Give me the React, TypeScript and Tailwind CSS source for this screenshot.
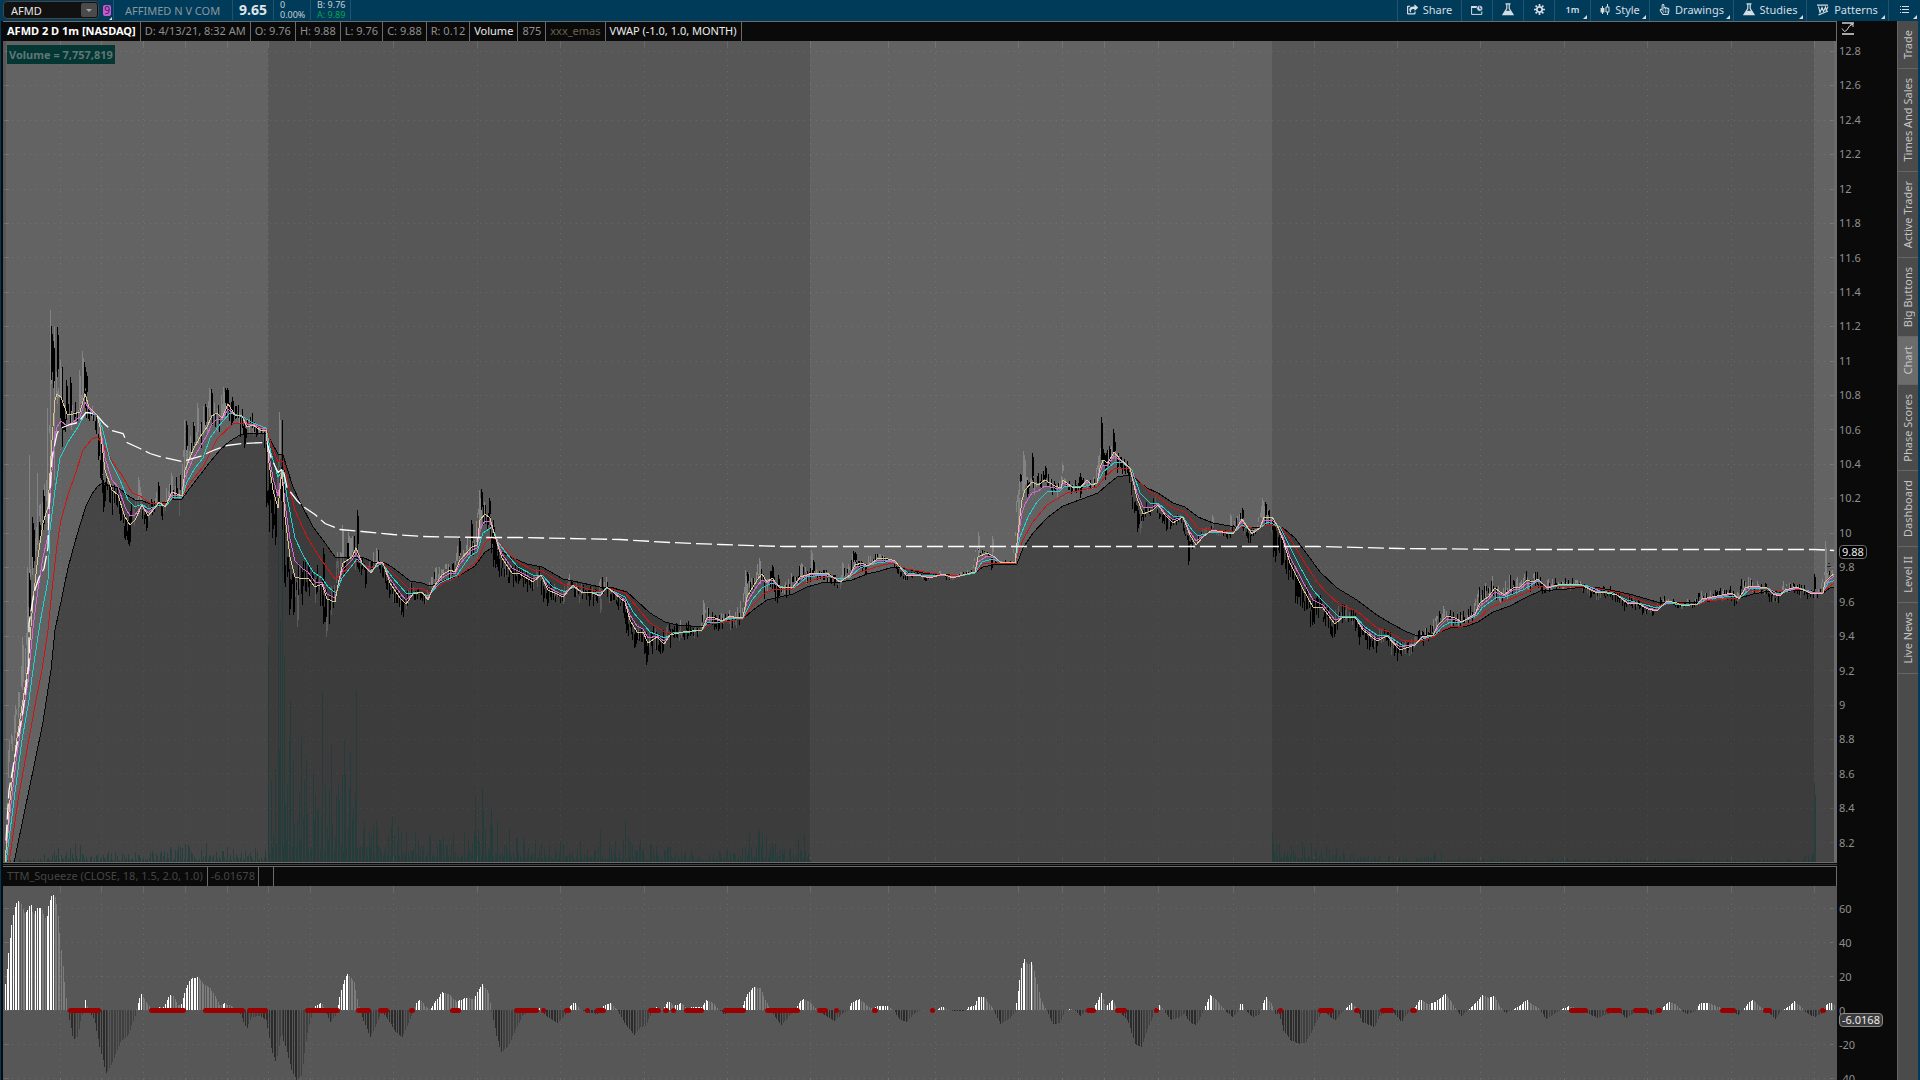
import React, { useState } from "react";
import { FaShareSquare, FaRegHandPointer } from "react-icons/fa";

type Point = [number, number];

// "x,y x,y ..." -> points
const parse = (s: string): Point[] => s.trim().split(/\s+/).map((p) => p.split(",").map(Number) as Point);

const valueAt = (line: Point[], x: number) => {
    if (x <= line[0][0]) return line[0][1];
    for (let i = 1; i < line.length; i++) {
        const [x1, y1] = line[i];
        if (x <= x1) {
            const [x0, y0] = line[i - 1];
            return y0 + ((y1 - y0) * (x - x0)) / (x1 - x0 || 1);
        }
    }
    return line[line.length - 1][1];
};

// small seeded generator, keeps the bars stable between renders
const createRandom = (seed: number) => () => {
    seed = (seed * 1664525 + 1013904223) % 4294967296;
    return seed / 4294967296;
};

const slow = parse(`14,863 24,814 34,766 43,722 51,670 55,630 62,597 68,568 75,542 80,525 86,506 92,494 97,487 102,483 108,485 115,487 120,489 127,495 135,500 143,501 148,503 157,504 167,502 173,499 182,499 190,488 200,475 210,462 220,450 230,441 240,435 253,433 267,433 272,443 278,454 283,455 287,468 293,487 300,502 313,527 323,540 335,557 353,557 362,557 373,562 383,562 392,567 400,573 410,581 422,583 430,586 438,583 448,579 457,577 467,571 475,566
485,552 492,548 500,551 513,558 527,564 542,567 563,579 573,581 600,587 613,588 627,592 637,601 650,613 665,622 677,625 702,627 707,624 727,621 743,619 753,610 767,600 780,597 793,594 807,587 825,582 840,582 852,580 867,574 880,571 893,567 907,569 923,573 937,574 950,575 963,575 975,573 983,567 993,565 1017,564 1023,548 1033,533 1047,518 1063,506 1082,499 1098,493 1107,485 1117,477 1130,475 1137,480 1147,488 1158,493 1173,503 1185,507 1198,517 1213,523 1235,527 1257,528 1268,524 1283,528 1295,538 1307,554 1320,572 1337,588 1357,600 1377,615 1390,623 1407,632 1415,635 1430,635
1443,631 1450,628 1467,626 1478,622 1493,612 1510,606 1525,598 1540,591 1567,589 1583,587 1600,588 1620,592 1633,595 1657,602 1673,602 1697,603 1717,600 1740,598 1753,594 1770,591 1780,592 1800,590 1813,592 1823,593 1830,588 1835,587`);

const medium = parse(`9,863 18,800 27,750 36,700 42,670 48,630 52,590 57,545 61,520 68,495 75,475 83,450 92,439 97,437 102,443 112,461 123,477 132,493 140,496 150,503 167,503 173,498 182,497 190,483 203,467 217,439 233,424 245,423 255,425 267,430 272,447 278,462 283,461 288,483 295,510 307,537 320,558 335,579 348,568 357,561 370,568 383,563 393,573 408,588 423,589 430,593 443,583 457,577 477,562 485,543 492,537 498,541 510,555 520,563 533,570 542,571 553,578 565,585 573,585 600,592 608,588 625,593 637,607 650,623 665,632 683,632 702,630 710,624 743,619 753,605 765,593 775,589 790,590 807,582 823,577 840,579 850,577 860,572 883,565 893,563 907,569 930,573 950,576
963,575 975,573 983,564 993,563 1015,563 1022,542 1032,523 1047,505 1067,493 1082,490 1097,487 1105,477 1115,468 1128,468 1137,479 1148,490 1158,497 1173,508 1185,512 1198,528 1213,530 1235,532 1243,526 1257,529 1268,524 1282,528 1293,543 1303,560 1317,582 1327,593 1340,605 1357,611 1377,628 1387,631 1402,640 1415,642 1425,640 1435,636 1443,630 1450,627 1463,626 1477,620 1490,608 1503,602 1523,594 1538,586 1550,587 1567,586 1585,586 1600,589 1620,593 1633,598 1657,606 1670,603 1697,605 1707,601 1737,598 1750,591 1770,589 1780,592 1800,589 1813,592 1823,592 1830,586 1835,583`);

const quick = parse(`6,863 14,800 22,740 29,700 33,670 40,623 48,580 50,530 55,490 60,458 68,442 78,427 86,412 97,415 102,427 110,460 120,480 128,500 135,507 142,504 148,509 160,505 167,505 173,497 182,497 187,482 195,468 203,458 210,438 218,427 230,413 243,417 253,423 266,428 271,453 278,477 283,470 287,497 295,538 303,555 313,572 322,578 328,587 336,593 342,578 350,568 357,559 370,571 382,563 392,577 407,594 420,592 428,596 440,583 457,575 470,556 477,552 483,533 492,527 498,542 510,558 518,567 533,575 542,575 553,587 565,592 573,587 583,592 600,593 607,588 625,597 633,612 650,632 665,638 673,633 690,632 702,630 708,622 720,622 730,618 743,618 752,600 762,588 772,583 783,587 795,587 807,577 823,575 840,579 850,577 860,568 877,563 893,561 908,573 928,576 940,575
955,577 975,573 982,562 992,559 1002,562 1015,563 1020,537 1028,517 1037,502 1048,491 1060,491 1065,486 1082,487 1097,483 1103,472 1115,462 1123,463 1132,470 1140,493 1150,503 1158,503 1173,516 1183,517 1192,530 1198,536 1212,532 1233,533 1242,525 1252,531 1260,528 1268,522 1280,527 1290,547 1300,567 1313,590 1323,601 1338,616 1355,616 1365,627 1377,635 1387,635 1402,645 1413,645 1420,640 1435,635 1442,627 1450,622 1462,622 1477,615 1483,607 1497,597 1505,597 1523,590 1538,581 1548,587 1567,585 1585,585 1600,591 1613,593 1627,600 1657,608 1668,603 1683,605 1698,604 1707,599 1733,596 1740,598 1750,589 1768,588 1778,594 1798,588 1812,592 1823,592 1828,583 1835,580`);

const fast = parse(`5,863 10,800 16,745 23,700 28,667 33,600 38,557 43,523 48,507 52,440 55,400 57,394 61,397 67,414 73,414 80,412 85,394 89,407 97,415 100,427 105,470 112,490 118,495 125,517 130,525 135,520 142,505 148,516 155,508 159,502 165,507 172,492 182,496 185,470 193,450 200,437 207,427 212,416 217,413 222,418 228,404 235,415 242,416 247,427 253,425 260,430 266,430 269,463 273,490 278,508 282,470 285,517 290,557 295,577 303,579 308,578 315,587 322,584 327,599 335,602 339,580 343,563 352,557 356,548 363,565 371,573 378,562 383,563 390,583 400,598 406,604 413,594 422,592 428,600 433,588 442,575 450,570 455,572 460,560 472,547 477,545 480,520 485,514 490,518 494,533 502,558 512,573 520,574 533,582 541,575 548,590 557,594 563,597 573,585 582,593 590,592 600,596 607,587 615,594 625,602 630,620 637,632 643,632 648,643 657,637 664,644 670,635 683,632 702,630 707,618 713,617 722,621 730,616 737,618 743,617 747,597 757,580 762,574 767,582 772,578 780,588 793,587 800,577 807,575 812,573 827,573 840,582 850,575 855,565 862,563 868,566 877,559 885,558 895,561 907,576 917,575 930,578 943,574
953,578 963,575 975,572 978,557 987,553 995,557 1000,562 1015,563 1018,533 1022,500 1025,490 1032,482 1038,485 1045,480 1055,486 1061,488 1063,480 1072,487 1080,488 1087,480 1092,485 1097,483 1100,468 1103,460 1108,463 1114,452 1120,459 1130,468 1137,498 1143,514 1153,510 1158,505 1165,515 1173,523 1183,517 1190,535 1196,545 1203,537 1212,530 1233,534 1242,519 1252,534 1260,528 1264,517 1272,517 1277,525 1283,540 1290,563 1302,587 1313,607 1323,608 1335,624 1343,617 1355,617 1363,630 1377,641 1387,636 1400,650 1415,645 1422,637 1433,635 1438,625 1447,616 1455,618 1462,622 1470,617 1475,614 1480,603 1488,597 1495,588 1504,595 1513,588 1520,587 1527,580 1533,582 1538,579 1547,588 1558,585 1580,584 1595,592 1607,593 1617,595 1627,603 1637,603 1648,609 1657,611 1667,601 1677,603 1683,606 1697,604 1702,599 1717,596 1732,593 1739,599 1745,588 1752,586 1767,588 1773,594 1780,596 1785,590 1797,587 1810,593 1823,593 1825,582 1830,577 1835,573`);

const vwap = parse(`6,840 9,790 16,750 23,710 29,663 29,623 34,592 39,577 44,568 48,547 49,507 52,457 57,433 60,428 70,424 78,422 86,412 95,413 104,423 112,430 123,433 127,442 140,448 150,453 160,456 182,461 200,456 213,450 227,445 242,443 267,442 271,457 278,472 283,468 287,487 297,500 303,506 315,514 325,523 340,529 362,531 393,534 423,536 480,537 520,537 570,538 620,539 670,542 720,544 783,546 1318,546 1400,548 1512,549 1814,549 1835,550`);

const purple: Point[] = fast.map(([x, y]) => [x, y * 0.6 + valueAt(quick, x) * 0.4]);

// x, high, low, up candle
const spikes: [number, number, number, boolean][] = [
    [22, 637, 690, true], [27, 567, 670, true], [29, 455, 590, true], [29, 573, 618, false], [32, 517, 557, false], [33, 523, 568, false],
    [37, 473, 540, true], [39, 522, 540, false], [43, 490, 530, false], [47, 408, 523, true], [50, 310, 500, true], [51, 326, 380, false], [53, 341, 388, false],
    [54, 327, 480, true], [57, 327, 377, false], [60, 360, 410, true], [62, 367, 447, false], [66, 380, 420, false], [70, 377, 417, false],
    [79, 370, 410, true], [82, 351, 400, true], [84, 362, 393, false], [86, 372, 396, false], [98, 434, 460, false], [101, 440, 480, false], [103, 480, 512, false],
    [129, 517, 546, false], [125, 515, 540, false], [138, 477, 500, true], [146, 510, 531, false], [158, 482, 507, false], [171, 473, 495, true],
    [184, 420, 497, true], [186, 421, 450, false], [193, 422, 446, false], [197, 403, 437, true], [205, 404, 425, false], [209, 388, 417, true],
    [211, 389, 415, false], [223, 387, 417, true], [225, 388, 403, false], [227, 388, 403, false], [232, 397, 423, false], [244, 424, 448, false],
    [266, 443, 507, false], [269, 470, 532, false], [272, 480, 538, false], [275, 490, 545, false], [279, 412, 467, true], [282, 420, 573, false],
    [284, 470, 583, false], [289, 573, 615, false], [293, 575, 615, false], [297, 580, 627, true], [323, 548, 587, false], [325, 590, 622, false],
    [326, 600, 637, true], [342, 525, 557, true], [348, 532, 560, true], [357, 510, 550, false], [376, 548, 565, true], [401, 597, 615, false],
    [459, 538, 556, false], [471, 520, 545, false], [479, 490, 540, true], [481, 489, 510, false], [489, 498, 517, false], [493, 520, 567, false], [495, 540, 568, false],
    [547, 583, 606, false], [563, 590, 604, true], [600, 596, 613, true], [626, 600, 633, false], [635, 630, 647, false], [646, 643, 665, false], [662, 640, 653, false],
    [703, 600, 622, true], [745, 570, 610, true], [747, 572, 583, false], [759, 558, 575, true], [772, 565, 580, false], [778, 583, 598, false],
    [801, 563, 580, true], [811, 550, 573, true], [813, 560, 573, false], [842, 562, 578, true], [853, 551, 562, false], [855, 552, 562, false],
    [978, 532, 557, true], [992, 536, 555, true], [991, 557, 570, false], [1018, 490, 540, true], [1020, 474, 482, false], [1023, 451, 497, true],
    [1024, 455, 490, true], [1027, 480, 497, false], [1032, 453, 480, false], [1045, 466, 480, false], [1062, 463, 473, true], [1080, 473, 498, false],
    [1098, 456, 480, true], [1101, 417, 460, false], [1102, 446, 463, false], [1105, 455, 480, false], [1109, 446, 466, false], [1113, 429, 453, false], [1114, 440, 453, false],
    [1137, 506, 532, false], [1140, 500, 533, true], [1166, 515, 531, false], [1188, 537, 565, false], [1212, 515, 530, true], [1230, 514, 530, true],
    [1242, 508, 520, false], [1262, 498, 520, true], [1265, 502, 517, false], [1273, 520, 557, false], [1275, 525, 562, false], [1281, 530, 565, false],
    [1297, 577, 600, false], [1312, 605, 625, false], [1334, 620, 637, false], [1814, 574, 592, false], [1825, 541, 590, true],
];

// typical candle reach along the session: x, pixels
const reach = parse("5,20 45,22 60,24 75,16 95,12 110,20 160,12 185,24 230,18 262,9 270,26 300,26 345,20 380,12 425,10 450,10 480,16 520,14 560,11 620,12 650,17 700,9 745,14 780,14 830,8 862,9 885,4 975,3 1010,2 1020,12 1090,8 1110,12 1150,9 1210,4 1265,9 1300,22 1340,14 1400,11 1440,10 1480,13 1530,11 1560,6 1620,8 1680,5 1740,8 1800,8 1835,3");

const buildCandles = () => {
    const random = createRandom(41);
    const up: string[] = [];
    const down: string[] = [];
    for (let x = 8; x < 1834; x += 1.4) {
        const size = valueAt(reach, x);
        const slope = valueAt(fast, x + 3) - valueAt(fast, x - 1);
        const middle = valueAt(fast, x) + slope * 1.2 + (random() - 0.5) * size * 0.9;
        const half = size * (0.15 + random() * 0.55);
        const isUp = random() + slope * 0.06 < 0.4;
        const px = Math.round(x) + 0.5;
        (isUp ? up : down).push(`M${px} ${Math.round(middle - half)}V${Math.round(middle + half)}`);
    }
    spikes.forEach(([x, high, low, isUp]) => {
        const inset = Math.round((low - high) * 0.15);
        const target = isUp ? up : down;
        target.push(`M${x + 0.5} ${high}V${low}`);
        if (low - high < 60) target.push(`M${x + 1.5} ${high + inset}V${low - inset}`);
    });
    return { up: up.join(""), down: down.join("") };
};

const volumeReach = parse("5,2 40,4 50,14 85,20 90,9 180,16 190,20 267,14 268,70 285,150 300,110 320,90 355,90 362,55 400,45 440,28 468,34 480,60 500,40 530,22 600,22 630,24 690,12 742,14 746,38 775,30 790,14 809,40 810,0 1272,0 1273,36 1300,22 1360,8 1420,5 1436,14 1450,5 1800,3 1814,12 1815,0");

const buildVolume = () => {
    const random = createRandom(7);
    let d = "";
    for (let x = 6; x < 1815; x += 1.4) {
        const h = Math.round(valueAt(volumeReach, x) * (0.12 + 0.9 * Math.pow(random(), 2)));
        if (h > 0) d += `M${Math.round(x) + 0.5} 862V${862 - h}`;
    }
    const peaks: Point[] = [[268, 646], [278, 515], [280, 620], [282, 530], [284, 656], [290, 700], [301, 735], [322, 692], [331, 745], [344, 740], [356, 690], [350, 752], [475, 796], [482, 788], [491, 807], [600, 830], [625, 820], [1272, 833], [1279, 843], [1435, 853], [1814, 783], [1815, 795]];
    peaks.forEach(([x, y]) => (d += `M${x + 0.5} 862V${y}`));
    return d;
};

const momentum = parse(`5,26 7,45 9,65 12,90 15,105 18,109 21,106 24,97 27,99 30,107 33,95 37,102 41,102 46,90 48,103 51,114 54,116 57,103 60,70 64,30 67,0 69,-10 73,-30 77,-27 80,-12 83,0 85,10 87,3 90,-3 94,-10 100,-40 106,-64 112,-52 120,-32 128,-25 135,-5 137,5 141,16 146,8 152,0 158,3 163,2 169,15 173,14 178,5 181,6 185,20 190,31 198,33 203,26 210,22 216,11 220,4 224,7 230,4 238,0 242,-8 246,-19 251,-7 260,-6 266,-10 271,-40 276,-52 281,-22 286,-40 292,-62 296,-70 301,-66 306,-30 310,-10 314,3 321,8 325,0 330,-13 335,-5 338,6 342,25 347,37 354,28 358,5 362,-8 370,-27 377,-12 382,-2 388,-10 395,-22 402,-27 408,-13 413,-2 416,7 420,11 425,3 430,1 436,10 442,18 450,15 456,8 465,12 474,11 478,20 482,26 488,18 491,0 496,-25 501,-42 508,-36 515,-20 522,-6 530,-1 538,1 540,3 545,-5 557,-13 566,-4 570,4 574,8 580,0 590,-3 598,-4 604,5 610,7 617,0 625,-14 634,-25 640,-17 645,-16 651,-3 656,3 663,0 665,5 668,9 674,4 681,7 686,2 695,3 701,3 706,10 713,7 719,0 724,-4 733,-2 742,3 746,14 753,23 760,22 765,10 770,1 775,-8 781,-15 788,-7 795,0 799,8 803,11 810,8 816,0 825,-6 834,-11 843,-3 848,0 852,8 859,11 866,5 872,1 878,4 887,4 893,0 900,-10 907,-12 913,-4 920,0 936,0 942,3 948,0 955,-1 965,-1 968,3 974,4 978,13 984,13 990,5 994,-1 1000,-14 1009,-9 1015,-1 1018,20 1021,42 1024,51 1028,45 1031,49 1035,35 1040,12 1046,0 1053,-14 1060,-13 1064,0 1070,1 1075,-1 1080,-6 1086,-1 1093,2 1098,10 1101,17 1105,3 1112,10 1118,0 1128,-12 1135,-35 1141,-37 1147,-20 1154,-3 1159,6 1163,0 1171,-10 1180,-7 1184,-3 1190,-13 1196,-15 1202,-3 1205,4 1210,15 1218,8 1224,0 1232,-7 1237,-2 1241,8 1245,0 1252,-7 1259,-5 1263,8 1266,13 1272,5 1275,-4 1279,-4 1283,-20 1290,-30 1299,-34 1306,-32 1312,-20 1318,-8 1323,0 1329,-6 1335,-10 1342,-2 1347,3 1351,7 1356,2 1362,-12 1374,-17 1380,-5 1388,-1 1395,-4 1401,-12 1407,-3 1412,0 1416,5 1420,11 1428,6 1435,8 1445,16 1450,10 1456,0 1461,-6 1468,0 1475,7 1482,15 1488,12 1494,14 1499,5 1505,-3 1512,0 1520,5 1526,10 1532,5 1538,2 1546,-9 1555,-3 1562,1 1568,4 1575,2 1585,-2 1597,-8 1607,-4 1618,-2 1626,-8 1635,-2 1640,-1 1652,-5 1658,-2 1662,2 1668,8 1675,6 1681,0 1686,-4 1694,-2 1700,7 1708,7 1718,3 1728,0 1738,-5 1743,0 1748,7 1753,10 1760,3 1766,0 1775,-9 1782,0 1789,4 1794,9 1801,3 1806,-3 1814,-7 1821,-4 1825,4 1830,8 1833,5`);

const buildMomentum = () => {
    const paths = { rising: "", fading: "", falling: "", recovering: "" };
    for (let x = 5; x < 1834; x += 1.6) {
        const v = valueAt(momentum, x);
        const growing = Math.abs(v) >= Math.abs(valueAt(momentum, x - 2));
        if (Math.abs(v) < 0.6) continue;
        const bar = `M${Math.round(x) + 0.5} 1010V${Math.round(1010 - v)}`;
        if (v > 0) paths[growing ? "rising" : "fading"] += bar;
        else paths[growing ? "falling" : "recovering"] += bar;
    }
    return paths;
};

const squeezes: Point[] = [[68, 101], [149, 186], [203, 245], [247, 268], [305, 340], [356, 371], [378, 389], [409, 415], [450, 461], [514, 539], [541, 546], [564, 571], [585, 590], [595, 606], [648, 661], [663, 669], [671, 676], [684, 704], [723, 746], [765, 800], [817, 828], [834, 839], [872, 878], [930, 935], [1086, 1096], [1115, 1127], [1154, 1159], [1278, 1283], [1318, 1334], [1354, 1360], [1380, 1394], [1410, 1417], [1569, 1588], [1606, 1622], [1633, 1648], [1656, 1662], [1720, 1736], [1763, 1772], [1820, 1826]];

const columns = [60, 101, 143, 185, 227, 268, 310, 393, 477, 560, 644, 727, 810, 888, 935, 1018, 1062, 1104, 1158, 1233, 1314, 1397, 1480, 1564, 1647, 1731, 1814];
const prices = Array.from({ length: 24 }, (_, i) => Number((12.8 - i * 0.2).toFixed(1)));

const candles = buildCandles();
const volume = buildVolume();
const bars = buildMomentum();
const toPoints = (line: Point[]) => line.map(([x, y]) => `${x},${Math.round(y)}`).join(" ");

function Grid({ top, bottom, rows }: { top: number; bottom: number; rows: number[] }) {
    return (
        <g shapeRendering="crispEdges" stroke="#fff" strokeOpacity={0.11}>
            {rows.map((y) => (
                <React.Fragment key={y}>
                    <path d={`M6 ${y}H1834`} strokeDasharray="1 5" />
                    <path d={`M4 ${y}H9M1830 ${y}H1834`} />
                </React.Fragment>
            ))}
            {columns.map((x) => (
                <React.Fragment key={x}>
                    <path d={`M${x + 0.5} ${top}V${bottom}`} strokeDasharray="1 5" />
                    <path d={`M${x + 0.5} ${top + 1}v5M${x + 0.5} ${bottom - 5}v4`} />
                </React.Fragment>
            ))}
        </g>
    );
}

function PriceChart() {
    return (
        <svg viewBox="3 41 1834 821" preserveAspectRatio="none" className="block h-full w-full" role="img" aria-label="AFMD price">
            <rect x="3" y="41" width="1834" height="821" fill="#575757" />
            <rect x="6" y="41" width="262" height="821" fill="#636363" />
            <rect x="810" y="41" width="462" height="821" fill="#636363" />
            <rect x="1814" y="41" width="20" height="821" fill="#636363" />
            <Grid top={41} bottom={862} rows={prices.map((p) => Math.round(51 + (12.8 - p) * 172) + 0.5)} />
            <g shapeRendering="crispEdges" fill="none">
                <path d={candles.up} stroke="#838383" />
                <path d={candles.down} stroke="#000" />
            </g>
            <polygon points={`${toPoints(slow)} 1835,862 14,862`} fill="#000" fillOpacity={0.3} />
            <g shapeRendering="crispEdges" fill="none">
                <path d={candles.down} stroke="#000" />
                <path d={volume} stroke="#1f3d3a" strokeOpacity={0.8} />
                <polyline points={toPoints(slow)} stroke="#050505" />
                <polyline points={toPoints(medium)} stroke="#d01313" />
                <polyline points={toPoints(quick)} stroke="#1fd0cb" />
                <polyline points={toPoints(purple)} stroke="#d965d9" />
                <polyline points={toPoints(fast)} stroke="#d8c795" />
            </g>
            <polyline points={toPoints(vwap)} transform="translate(0 .5)" fill="none" stroke="#fff" strokeWidth={1.3} strokeDasharray="16 5" />
            <path d="M1826.5 566.5h4M1828 563.5h2" stroke="#222" shapeRendering="crispEdges" />
            <rect x="1834" y="41" width="3" height="821" fill="#6c6c6c" />
        </svg>
    );
}

function SqueezeChart() {
    return (
        <svg viewBox="3 886 1834 194" preserveAspectRatio="none" className="block h-full w-full" role="img" aria-label="TTM_Squeeze">
            <rect x="3" y="886" width="1834" height="194" fill="#575757" />
            <Grid top={886} bottom={1084} rows={[908.5, 942.5, 976.5, 1010.5, 1044.5, 1078.5]} />
            <g shapeRendering="crispEdges">
                <path d={bars.rising} stroke="#fff" />
                <path d={bars.fading} stroke="#7d7d7d" />
                <path d={bars.falling} stroke="#2b2b2b" />
                <path d={bars.recovering} stroke="#404040" />
            </g>
            {squeezes.map(([from, to]) => (
                <rect key={from} x={from} y="1008" width={to - from} height="5" rx="2.5" fill="#9a0000" />
            ))}
        </svg>
    );
}

const FlaskIcon = () => (
    <svg width="12" height="13" viewBox="0 0 12 13" fill="none" stroke="currentColor">
        <path d="M3.5.8h5M4.8 1v4.5L1 11.6h10L7.2 5.5V1" strokeWidth="1.2" />
        <path d="M3.6 7.8h4.8l2.3 3.8H1.3z" fill="currentColor" stroke="none" />
    </svg>
);

const GearIcon = () => (
    <svg width="11" height="11" viewBox="0 0 11 11" fill="none" stroke="currentColor">
        <circle cx="5.5" cy="5.5" r="2.7" strokeWidth="1.8" />
        <path d="M5.5 0v2M5.5 9v2M0 5.5h2M9 5.5h2M1.6 1.6l1.4 1.4M8 8l1.4 1.4M1.6 9.4L3 8M8 3l1.4-1.4" strokeWidth="1.7" />
    </svg>
);

const DetachIcon = () => (
    <svg width="12" height="10" viewBox="0 0 12 10" fill="none" stroke="currentColor">
        <path d="M6 1.5H.6v7.9h10.2V6.5" />
        <path d="M.5 1.5h5v1h-5z" fill="currentColor" />
        <circle cx="8.7" cy="3.3" r="2.9" fill="currentColor" stroke="#003b5a" strokeWidth=".6" />
        <path d="M8.7 1.3v2.4h1.5" stroke="#003b5a" strokeWidth=".9" />
    </svg>
);

const CandleIcon = () => (
    <svg width="10" height="12" viewBox="0 0 10 12" fill="none" stroke="currentColor">
        <path d="M2.5 2v8M7.5 0v3M7.5 8v3" />
        <path d="M.6 4h3.8v4.5H.6z" fill="currentColor" stroke="none" />
        <path d="M6 3h3v5H6z" />
    </svg>
);

const PatternIcon = () => (
    <svg width="12" height="12" viewBox="0 0 12 12" fill="none" stroke="currentColor">
        <path d="M0 1.2h11M1.5 11L11 7" strokeWidth="1.3" />
        <path d="M1.500 2.500L3 8.500 5 3.500l1.500 4 2-4.500.8 3.500 1.700-4" strokeWidth="1.1" />
    </svg>
);

const ListIcon = () => (
    <svg width="9" height="9" viewBox="0 0 9 9" fill="none" stroke="currentColor" shapeRendering="crispEdges">
        <path d="M0 1.5h1M2 1.5h7M0 4.5h1M2 4.5h7M0 7.5h1M2 7.5h7" />
    </svg>
);

const ScaleIcon = () => (
    <svg width="13" height="13" viewBox="0 0 13 13" fill="none" stroke="#d0d0d0">
        <path d="M1 1h12" strokeWidth="1.5" />
        <path d="M1 12h12" strokeWidth="2" stroke="#a8a8a8" />
        <path d="M1 6.5l2.5 3 2-1 3-4.500L12 2M12 5V2H9" />
    </svg>
);

function ToolButton({ children, label, corner, width }: { children: React.ReactNode; label?: string; corner?: boolean; width: string }) {
    return (
        <button
            type="button"
            aria-label={label}
            className={`relative flex h-full items-center justify-center gap-[5px] border-l border-[#1d5373] pb-0.5 text-[11px] text-[#d5dde2] ${width}`}
        >
            {children}
            {corner && (
                <svg width="4" height="4" viewBox="0 0 4 4" className="absolute right-[3px] bottom-[2px]">
                    <path d="M4 0v4H0z" fill="#d5dde2" />
                </svg>
            )}
        </button>
    );
}

function TopBar() {
    const [symbol, setSymbol] = useState("AFMD");
    return (
        <header className="flex h-[21px] shrink-0 items-center justify-between bg-[#003b5a] leading-none">
            <div className="flex h-full items-center pb-px">
                <div className="ml-[3px] flex h-[18px] w-24 items-center rounded-sm border border-[#454545] bg-[#111] pr-px">
                    <input
                        aria-label="Symbol"
                        value={symbol}
                        onChange={(e) => setSymbol(e.target.value)}
                        className="w-full min-w-0 bg-transparent pl-[7px] text-[11px] text-[#e4e4e4] outline-none"
                    />
                    <button type="button" aria-label="Symbol list" className="flex h-[14px] w-4 shrink-0 items-center justify-center rounded-xs bg-[#4b4b4b]">
                        <svg width="6" height="3" viewBox="0 0 6 3">
                            <path d="M0 0h6L3 3z" fill="#a5a5a5" />
                        </svg>
                    </button>
                </div>
                <button type="button" className="relative mr-0.5 ml-1 h-[11px] w-2 rounded-xs bg-[#c45bd3] text-[10px] leading-[11px] text-[#40124a]">
                    9
                    <svg width="3" height="3" viewBox="0 0 4 4" className="absolute -right-px -bottom-[4px]">
                        <path d="M4 0v4H0z" fill="#d5dde2" />
                    </svg>
                </button>
                <span className="flex h-full w-[119px] items-center border-l border-[#1d5373] pl-[11px] text-[11px] whitespace-nowrap text-[#8b979e]">AFFIMED N V COM</span>
                <span className="flex h-full w-[41px] items-center border-l border-[#1d5373] pl-1.5 text-[14px] font-bold text-[#dfe4e7]">9.65</span>
                <span className="flex h-full w-[37px] flex-col justify-center border-l border-[#1d5373] pl-1.5 text-[9px] leading-[10px] text-[#c5ced3]">
                    <span>0</span>
                    <span>0.00%</span>
                </span>
                <span className="flex h-full w-[41px] flex-col justify-center border-x border-[#1d5373] pl-1.5 text-[9px] leading-[10px] text-[#c5ced3]">
                    <span>B: 9.76</span>
                    <span className="text-[#0aa54a]">A: 9.89</span>
                </span>
            </div>
            <nav className="flex h-full">
                <ToolButton width="w-16">
                    <FaShareSquare size={11} />
                    Share
                </ToolButton>
                <ToolButton width="w-[31px]" label="Detach">
                    <DetachIcon />
                </ToolButton>
                <ToolButton width="w-[31px]" label="Edit studies">
                    <FlaskIcon />
                </ToolButton>
                <ToolButton width="w-[31px]" label="Settings">
                    <GearIcon />
                </ToolButton>
                <ToolButton width="w-9" corner>
                    <span className="text-[9px] font-semibold">1m</span>
                </ToolButton>
                <ToolButton width="w-[59px]" corner>
                    <CandleIcon />
                    Style
                </ToolButton>
                <ToolButton width="w-[84px]" corner>
                    <FaRegHandPointer size={11} />
                    Drawings
                </ToolButton>
                <ToolButton width="w-[73px]" corner>
                    <FlaskIcon />
                    Studies
                </ToolButton>
                <ToolButton width="w-[82px]" corner>
                    <PatternIcon />
                    Patterns
                </ToolButton>
                <ToolButton width="w-8" label="Menu" corner>
                    <ListIcon />
                </ToolButton>
            </nav>
        </header>
    );
}

const studies = [
    { text: "AFMD 2 D 1m [NASDAQ]", style: "font-bold text-white" },
    { text: "D: 4/13/21, 8:32 AM", style: "text-[#8f8f8f]" },
    { text: "O: 9.76", style: "text-[#8f8f8f]" },
    { text: "H: 9.88", style: "text-[#8f8f8f]" },
    { text: "L: 9.76", style: "text-[#8f8f8f]" },
    { text: "C: 9.88", style: "text-[#8f8f8f]" },
    { text: "R: 0.12", style: "text-[#8f8f8f]" },
    { text: "Volume", style: "text-[#eaeaea]" },
    { text: "875", style: "text-[#8f8f8f]" },
    { text: "xxx_emas", style: "text-[#6a634c]" },
    { text: "VWAP (-1.0, 1.0, MONTH)", style: "text-[#eaeaea]" },
];

const tabs = ["Trade", "Times And Sales", "Active Trader", "Big Buttons", "Chart", "Phase Scores", "Dashboard", "Level II", "Live News"];

function StudyRow({ children }: { children: React.ReactNode }) {
    return <div className="flex h-5 shrink-0 border-t border-r border-[#6b6b6b] bg-[#0a0a0a] text-[11px] leading-[18px] whitespace-nowrap">{children}</div>;
}

function Axis() {
    return (
        <aside className="relative flex w-15 shrink-0 flex-col overflow-hidden bg-[#0a0a0a] text-[11px] leading-[14px] text-[#8f8f8f]">
            <div className="h-5 shrink-0 pt-px pl-1">
                <ScaleIcon />
            </div>
            <div className="relative flex min-h-0 flex-1 flex-col justify-between pt-[3px] pb-3 pl-0.5">
                {prices.map((price) => (
                    <span key={price}>{price}</span>
                ))}
                <span className="absolute top-[504px] left-0.5 rounded border border-[#6b6b6b] bg-black px-[2px] leading-[12px] text-[#eaeaea]">9.88</span>
            </div>
            <div className="relative flex h-[218px] shrink-0 flex-col pt-[30px] pl-0.5 leading-[34px]">
                {[60, 40, 20, 0, -20, -40].map((level) => (
                    <span key={level} className="h-[34px] shrink-0">
                        {level}
                    </span>
                ))}
                <span className="absolute top-[151px] left-0.5 rounded border border-[#8a8a8a] bg-[#3a3a3a] px-[2px] leading-[12px] text-[#eaeaea]">-6.0168</span>
            </div>
        </aside>
    );
}

function SideTabs() {
    const [active, setActive] = useState("Chart");
    return (
        <div role="tablist" className="flex w-[23px] shrink-0 flex-col border-r-2 border-l border-r-[#003b5a] border-l-[#666] bg-[#4b4b4b]">
            {tabs.map((tab) => (
                <button
                    key={tab}
                    type="button"
                    role="tab"
                    aria-selected={active === tab}
                    onClick={() => setActive(tab)}
                    className={`flex w-full items-center justify-center border-b border-[#666] py-[9px] text-[11px] text-[#c4c4c4] ${active === tab ? "bg-[#6c6c6c]" : ""}`}
                >
                    <span className="rotate-180 leading-[18px] whitespace-nowrap [writing-mode:vertical-rl]">{tab}</span>
                </button>
            ))}
        </div>
    );
}

function App() {
    return (
        <div className="flex h-screen flex-col overflow-hidden bg-[#0a0a0a] font-['Noto_Sans',sans-serif]">
            <TopBar />
            <main className="flex min-h-0 flex-1 border-l border-[#003b5a]">
                <div className="flex min-w-0 flex-1 flex-col pl-0.5">
                    <StudyRow>
                        {studies.map((study) => (
                            <span key={study.text} className={`border-r border-[#6b6b6b] px-1 ${study.style}`}>
                                {study.text}
                            </span>
                        ))}
                    </StudyRow>
                    <div className="relative min-h-0 flex-1">
                        <PriceChart />
                        <span className="absolute top-1 left-1 bg-[#043634] px-0.5 text-[11px] leading-[19px] font-bold text-[#5f7674]">Volume = 7,757,819</span>
                    </div>
                    <div className="flex h-1 shrink-0 flex-col justify-between border-t border-[#6b6b6b] pb-px">
                        <div className="mt-px h-px bg-[#3f3f3f]" />
                    </div>
                    <StudyRow>
                        <span className="border-r border-[#6b6b6b] px-1 text-[#454545]">TTM_Squeeze (CLOSE, 18, 1.5, 2.0, 1.0)</span>
                        <span className="border-r border-[#6b6b6b] px-[3px] text-[#454545]">-6.01678</span>
                        <span className="w-[15px] border-r border-[#6b6b6b]" />
                    </StudyRow>
                    <div className="h-[194px] shrink-0">
                        <SqueezeChart />
                    </div>
                </div>
                <Axis />
                <SideTabs />
            </main>
        </div>
    );
}

export default App;
